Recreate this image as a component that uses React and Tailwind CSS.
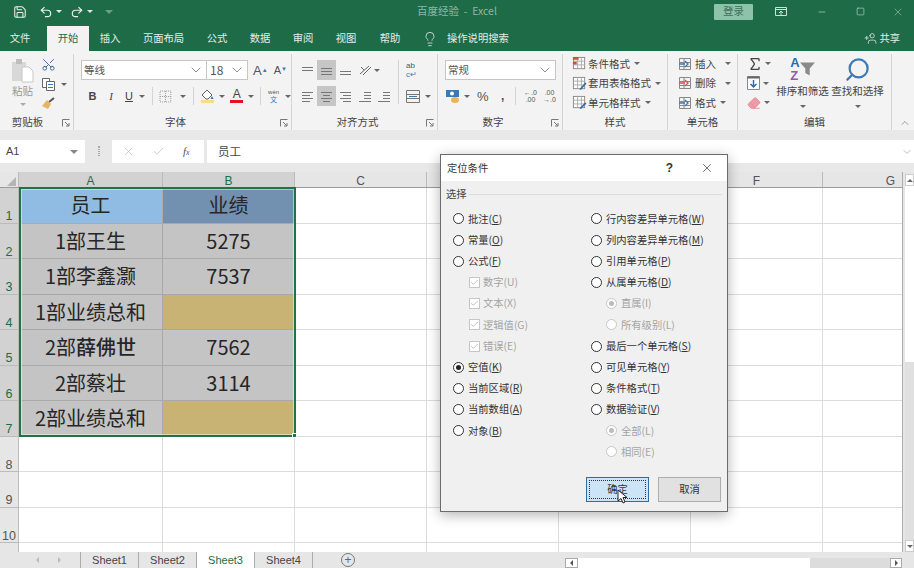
import { ChevronDown, Search, Lightbulb, UserPlus, Scissors, Undo2, Redo2, Save, Minus, Square, X, Check, Sigma, Eraser } from 'lucide-react';

const font = "font-['Noto_Sans_CJK_SC','Liberation_Sans',sans-serif]";

const tabs = [
    { name: '文件', w: 'w-[40px] mr-[7px]' },
    { name: '开始', w: 'w-[42px]', active: true },
    { name: '插入', w: 'w-[42px]' },
    { name: '页面布局', w: 'w-[65px]' },
    { name: '公式', w: 'w-[42px]' },
    { name: '数据', w: 'w-[44px]' },
    { name: '审阅', w: 'w-[42px]' },
    { name: '视图', w: 'w-[44px]' },
    { name: '帮助', w: 'w-[44px]' },
];

const columns = ['A', 'B', 'C', 'D', 'E', 'F', 'G'];

const rows = [
    ['员工', '业绩'],
    ['1部王生', '5275'],
    ['1部李鑫灏', '7537'],
    ['1部业绩总和', ''],
    [<>2部<span className="font-medium">薛佛世</span></>, '7562'],
    ['2部蔡壮', '3114'],
    ['2部业绩总和', ''],
];

function Caret({ className = '' }) {
    return <span className={`inline-block h-0 w-0 border-x-[3px] border-t-[3px] border-x-transparent border-t-[#666] ${className}`} />;
}

function GroupLabel({ children, launcher }) {
    return (
        <div className={`relative mt-auto flex h-[16px] items-center justify-center text-[10.5px] leading-none text-[#444] ${launcher ? 'pr-[14px]' : ''}`}>
            {children}
            {launcher && (
                <svg className="absolute right-[3px] top-[5px]" width="8" height="8" viewBox="0 0 8 8" fill="none" stroke="#777">
                    <path d="M.5 7.5v-7h7M3 3l4 4M7 4v3H4" />
                </svg>
            )}
        </div>
    );
}

function Group({ w, label, launcher, children }) {
    return (
        <div className={`flex shrink-0 flex-col border-r border-[#d4d4d4] ${w}`}>
            <div className="min-h-0 flex-1">{children}</div>
            <GroupLabel launcher={launcher}>{label}</GroupLabel>
        </div>
    );
}

function Lines({ rows, active }) {
    return (
        <span className={`flex h-[20px] w-[19px] items-center justify-center ${active ? 'bg-[#c6c6c6]' : ''}`}>
            <svg width="13" height="12" viewBox="0 0 13 12" stroke="#777">
                {rows.map((r, i) => (
                    <path key={i} d={`M${r[0]} ${r[1]}.5H${r[2]}`} />
                ))}
            </svg>
        </span>
    );
}

function CellIcon({ kind }) {
    return (
        <svg width="15" height="15" viewBox="0 0 16 16" fill="none" className="shrink-0">
            <rect x="1.5" y="1.5" width="12" height="12" fill="#fff" stroke="#888" />
            <path d="M1.5 5.5h12M1.5 9.5h12M6 1.5v12M10 1.5v12" stroke="#aaa" />
            {kind === 'cond' && <path d="M1 1h6v3H1zM1 6h4v3H1z" fill="#c0563a" />}
            {kind === 'table' && <path d="M8 14l6-7 1.500 1-6 7z" fill="#2b6cb0" />}
            {kind === 'style' && <path d="M8 14l6-6 1.500 1-6 6z" fill="#2b6cb0" />}
        </svg>
    );
}

function StyleRow({ kind, label }) {
    return (
        <div className="flex h-[19.5px] items-center gap-[1px] text-[10.5px] leading-none text-[#444]">
            <CellIcon kind={kind} />
            <span>{label}</span>
            <Caret className="ml-[3px]" />
        </div>
    );
}

function InsertRow({ label, color, caretGap }) {
    return (
        <div className="flex h-[19.5px] items-center gap-[3px] text-[10.5px] leading-none text-[#444]">
            <svg width="14" height="14" viewBox="0 0 14 14" fill="none" className="shrink-0">
                <path d="M1.5 1.5h11v11h-11zM1.5 5.5h11M1.5 9.5h11M6 1.5v11" stroke="#888" />
                <path d="M1 7h6M7 4l3 3-3 3" stroke={color} strokeWidth="1.3" />
            </svg>
            <span>{label}</span>
            <Caret className={caretGap} />
        </div>
    );
}

function Ribbon() {
    return (
        <div className={`flex h-[79px] bg-[#f3f3f3] pt-[3px] ${font}`}>
            <Group w="w-[74px]" label={<span className="mr-[4px]">剪贴板</span>} launcher>
                <div className="flex h-[60px] pl-[10px]">
                    <div className="flex w-[25px] flex-col items-center pt-[4px]">
                        <svg width="24" height="25" viewBox="0 0 24 25" fill="none">
                            <path d="M1 4h14v19H1z" fill="#d8d8d8" />
                            <path d="M5 1h6v5H5z" fill="#bdbdbd" />
                            <path d="M11 9h7l4 4v11H11z" fill="#fff" stroke="#c8c8c8" />
                        </svg>
                        <span className="mt-[3px] text-[10.5px] leading-none text-[#999]">粘贴</span>
                        <Caret className="mt-[6px] border-t-[#aaa]" />
                    </div>
                    <div className="ml-[6px] flex flex-col pt-[1px]">
                        <span className="flex h-[19.5px] items-center">
                            <Scissors size={15} className="-rotate-90 text-[#41699e]" strokeWidth={1.5} />
                        </span>
                        <span className="flex h-[19.5px] items-center gap-[6px]">
                            <svg width="14" height="14" viewBox="0 0 14 14" fill="none" stroke="#666">
                                <path d="M1.5 1.5h7v9h-7z" fill="#fff" />
                                <path d="M5.5 4.5h8v9h-8z" fill="#fff" />
                                <path d="M7 7.5h5M7 10.5h5" stroke="#3b7ab5" />
                            </svg>
                            <Caret />
                        </span>
                        <span className="flex h-[19.5px] items-center">
                            <svg width="14" height="13" viewBox="0 0 14 13" fill="none">
                                <path d="M8 5l5-4" stroke="#555" strokeWidth="2" />
                                <path d="M6 3l4 4-3 5-6-3z" fill="#e7b461" />
                            </svg>
                        </span>
                    </div>
                </div>
            </Group>
            <Group w="w-[218px]" label="字体" launcher>
                <div className="flex items-center pl-[7px] pt-[6px]">
                    <div className="flex h-[20px] w-[126px] items-center justify-between border border-[#c6c6c6] bg-white pl-[2px] pr-[2px] text-[10.5px] leading-none text-[#555]">
                        等线
                        <ChevronDown size={16} className="text-[#555]" strokeWidth={1} />
                    </div>
                    <div className="ml-[-1px] flex h-[20px] w-[42px] items-center justify-between border border-[#c6c6c6] bg-white pl-[3px] pr-[2px] text-[12px] leading-none text-[#555]">
                        18
                        <ChevronDown size={16} className="text-[#555]" strokeWidth={1} />
                    </div>
                    <span className="ml-[5px] font-['Liberation_Sans',sans-serif] text-[13px] leading-none text-[#555]">A<sup className="text-[6px] text-[#3b7ab5]">▲</sup></span>
                    <span className="ml-[6px] font-['Liberation_Sans',sans-serif] text-[11px] leading-none text-[#555]">A<sup className="text-[6px] text-[#3b7ab5]">▼</sup></span>
                </div>
                <div className="mt-[4px] flex h-[24px] items-center pl-[9px] font-['Liberation_Sans',sans-serif] text-[11px] text-[#444]">
                    <span className="w-[19px] text-center font-bold">B</span>
                    <span className="w-[19px] text-center font-['Liberation_Serif',serif] italic">I</span>
                    <span className="w-[17px] text-center underline">U</span>
                    <Caret className="ml-[2px]" />
                    <span className="ml-[7px] mr-[6px] h-[18px] w-px bg-[#d4d4d4]" />
                    <svg width="13" height="13" viewBox="0 0 13 13" fill="none" stroke="#999" strokeDasharray="1 1"><path d="M1 1h11v11H1zM1 6.5h11M6.5 1v11" /></svg>
                    <Caret className="ml-[8px]" />
                    <span className="ml-[7px] mr-[6px] h-[18px] w-px bg-[#d4d4d4]" />
                    <span className="flex flex-col items-center">
                        <svg width="14" height="11" viewBox="0 0 14 11" fill="none"><path d="M2 6l5-5 5 5-4 4H6z" fill="#fff" stroke="#666" /><path d="M12 7l1.500 3h-3z" fill="#3b7ab5" /></svg>
                        <span className="h-[3px] w-[13px] bg-[#f7dc8c]" />
                    </span>
                    <Caret className="ml-[5px]" />
                    <span className="ml-[5px] flex flex-col items-center leading-none">
                        <span className="text-[12px] leading-[11px] text-[#444]">A</span>
                        <span className="h-[3px] w-[13px] bg-[#e81123]" />
                    </span>
                    <Caret className="ml-[5px]" />
                    <span className="ml-[6px] mr-[6px] h-[18px] w-px bg-[#d4d4d4]" />
                    <span className="flex w-[13px] flex-col items-center leading-none">
                        <span className="text-[6px] leading-[7px] text-[#555]">wén</span>
                        <span className={`text-[7px] leading-[7px] text-[#3b7ab5] ${font}`}>文</span>
                    </span>
                    <Caret className="ml-[5px]" />
                </div>
            </Group>
            <Group w="w-[146px]" label="对齐方式" launcher>
                <div className="flex pl-[6px] pt-[6px]">
                    <div className="flex w-[100px] shrink-0 flex-wrap">
                        <Lines rows={[[1, 3, 12], [1, 6, 12]]} />
                        <Lines active rows={[[1, 4, 12], [1, 7, 12], [1, 10, 12]]} />
                        <Lines rows={[[1, 7, 12], [1, 10, 12]]} />
                        <span className="flex h-[20px] w-[28px] items-center justify-center gap-[2px]">
                            <svg width="13" height="13" viewBox="0 0 13 13" fill="none" stroke="#666"><path d="M1 10L10 2M4 11l8-8M2 3l3 3" /></svg>
                            <Caret />
                        </span>
                        <span className="h-[6px] w-full" />
                        <Lines rows={[[1, 2, 12], [1, 5, 9], [1, 8, 12], [1, 11, 9]]} />
                        <Lines active rows={[[1, 2, 12], [3, 5, 10], [1, 8, 12], [3, 11, 10]]} />
                        <Lines rows={[[1, 2, 12], [4, 5, 12], [1, 8, 12], [4, 11, 12]]} />
                        <Lines rows={[[6, 2, 13], [6, 5, 13], [6, 8, 13], [1, 11, 13]]} />
                        <Lines rows={[[6, 2, 13], [6, 5, 13], [6, 8, 13], [1, 11, 13]]} />
                    </div>
                    <div className="mr-[7px] h-[44px] w-px bg-[#d4d4d4]" />
                    <div className="flex flex-col gap-[6px]">
                        <span className="flex h-[20px] flex-col justify-center font-['Liberation_Sans',sans-serif] text-[8px] leading-[9px] text-[#555]">
                            <span>ab</span>
                            <span className="text-[#3b7ab5]">c↵</span>
                        </span>
                        <span className="flex h-[20px] items-center gap-[5px]">
                            <svg width="14" height="13" viewBox="0 0 14 13" fill="none" stroke="#777"><path d="M.5.5h13v12H.5zM.5 4.500h13M.500 8.500h13" /><path d="M3 6.500h8" stroke="#3b7ab5" /></svg>
                            <Caret />
                        </span>
                    </div>
                </div>
            </Group>
            <Group w="w-[125px]" label="数字" launcher>
                <div className="pl-[7px] pt-[6px]">
                    <div className="flex h-[20px] w-[111px] items-center justify-between border border-[#c6c6c6] bg-white pl-[2px] pr-[2px] text-[10.5px] leading-none text-[#555]">
                        常规
                        <ChevronDown size={16} className="text-[#555]" strokeWidth={1} />
                    </div>
                    <div className="mt-[6px] flex h-[20px] items-center font-['Liberation_Sans',sans-serif] text-[#555]">
                        <svg width="15" height="15" viewBox="0 0 15 15" fill="none"><path d="M1 1h13v7H1z" fill="#3b7ab5" /><circle cx="7" cy="4.500" r="2" fill="#fff" /><ellipse cx="10" cy="11" rx="4" ry="3" fill="#e7b461" /></svg>
                        <Caret className="ml-[4px]" />
                        <span className="ml-[7px] w-[15px] text-[13px] leading-none">%</span>
                        <span className="ml-[9px] w-[8px] text-[12px] font-bold leading-none">,</span>
                        <span className="ml-[6px] mr-[5px] h-[18px] w-px bg-[#d4d4d4]" />
                        <span className="w-[19px] text-center text-[7px] leading-[7px]">←.0<br />.00</span>
                        <span className="w-[19px] text-center text-[7px] leading-[7px]">.00<br />→.0</span>
                    </div>
                </div>
            </Group>
            <Group w="w-[105px]" label="样式">
                <div className="flex flex-col pl-[9px]">
                    <StyleRow kind="cond" label="条件格式" />
                    <StyleRow kind="table" label="套用表格格式" />
                    <StyleRow kind="style" label="单元格样式" />
                </div>
            </Group>
            <Group w="w-[70px]" label="单元格">
                <div className="flex flex-col pl-[10px]">
                    <InsertRow label="插入" color="#3b7ab5" caretGap="ml-[6px]" />
                    <InsertRow label="删除" color="#d9534f" caretGap="ml-[6px]" />
                    <InsertRow label="格式" color="#3b7ab5" caretGap="ml-[1px]" />
                </div>
            </Group>
            <Group w="w-[154px]" label="编辑">
                <div className="flex pl-[9px]">
                    <div className="flex w-[28px] shrink-0 flex-col">
                        <div className="flex h-[19.5px] items-center gap-[1px]">
                            <Sigma size={16} className="text-[#444]" strokeWidth={2} />
                            <Caret className="ml-[1px]" />
                        </div>
                        <div className="flex h-[19.5px] items-center gap-[3px]">
                            <svg width="13" height="14" viewBox="0 0 13 14" fill="none"><path d="M.5.5h12v13H.5z" fill="#fff" stroke="#888" /><path d="M.5.5h12v2H.5z" fill="#666" /><path d="M6.500 4v7M3.500 8l3 3 3-3" stroke="#2b6cb0" strokeWidth="1.500" /></svg>
                            <Caret />
                        </div>
                        <div className="flex h-[19.5px] items-center gap-[3px]">
                            <Eraser size={14} className="text-[#e08a94]" fill="#ef9aa4" strokeWidth={1.500} />
                            <Caret />
                        </div>
                    </div>
                    <div className="flex w-[55px] shrink-0 flex-col items-center text-[10.5px] leading-none text-[#444]">
                        <span className="flex h-[30px] items-center">
                            <span className="flex flex-col font-['Liberation_Sans',sans-serif] text-[13px] font-bold leading-[13px]">
                                <span className="text-[#2b6cb0]">A</span>
                                <span className="text-[#8e5ca8]">Z</span>
                            </span>
                            <svg width="15" height="14" viewBox="0 0 17 15" fill="#8a8a8a"><path d="M0 0h17l-6 7v8l-5-3V7z" /></svg>
                        </span>
                        <span className="mt-[2px]">排序和筛选</span>
                        <Caret className="mt-[8px]" />
                    </div>
                    <div className="flex w-[55px] shrink-0 flex-col items-center text-[10.5px] leading-none text-[#444]">
                        <span className="flex h-[30px] items-center">
                            <Search size={27} className="-scale-x-100 text-[#3b7ab5]" strokeWidth={2} />
                        </span>
                        <span className="mt-[2px]">查找和选择</span>
                        <Caret className="mt-[8px]" />
                    </div>
                </div>
            </Group>
            <div className="relative flex-1">
                <ChevronDown size={12} className="absolute bottom-[1px] right-[3px] rotate-180 text-[#666]" strokeWidth={1.200} />
            </div>
        </div>
    );
}

function TitleBar() {
    return (
        <div className={`flex h-[26px] items-center bg-[#1e6b48] pb-[3px] text-[#e9f1ec] ${font}`}>
            <Save size={14} className="ml-[13px]" strokeWidth={1.800} />
            <Undo2 size={14} className="ml-[12px]" strokeWidth={2} />
            <Caret className="ml-[3px] border-t-[#dfe9e3]" />
            <Redo2 size={14} className="ml-[8px]" strokeWidth={2} />
            <Caret className="ml-[3px] border-t-[#dfe9e3]" />
            <span className="ml-[12px] h-0 w-0 border-x-[4px] border-t-[4px] border-x-transparent border-t-[#6e9c84]" />
            <span className="ml-[300px] w-[88px] text-center text-[10.500px] leading-none text-[#8fb7a3]">百度经验&nbsp; -&nbsp; Excel</span>
            <span className="ml-[213px] flex h-[16px] w-[39px] items-center justify-center rounded-[1px] bg-[#8dc3aa] text-[10.5px] leading-none text-[#3f6f58]">登录</span>
            <svg width="12" height="10" viewBox="0 0 12 10" fill="none" stroke="#cfe0d6" className="ml-[22px]"><path d="M.5.5h11v8H.500zM.500 2.500h11M6 4v4M4 6l2-2 2 2" /></svg>
            <Minus size={10} className="ml-[30px] text-[#9cc0ad]" />
            <Square size={9} className="ml-[29px] text-[#cfe0d6]" strokeWidth={1.500} />
            <X size={12} className="ml-[27px] text-[#9cc0ad]" strokeWidth={1.300} />
        </div>
    );
}

function TabBar() {
    return (
        <div className={`flex h-[25px] items-stretch bg-[#1e6b48] text-[10.3px] leading-none text-[#e4ede8] ${font}`}>
            {tabs.map((t) => (
                <span key={t.name} className={`flex items-center justify-center ${t.w} ${t.active ? 'bg-[#f3f3f3] text-[#1e6b48]' : ''}`}>
                    {t.name}
                </span>
            ))}
            <Lightbulb size={16} className="ml-[10px] self-center" strokeWidth={1.200} />
            <span className="ml-[9px] self-center">操作说明搜索</span>
            <UserPlus size={13} className="ml-auto self-center -scale-x-100" strokeWidth={1.400} />
            <span className="ml-[2px] mr-[14px] self-center">共享</span>
        </div>
    );
}

function FormulaBar() {
    return (
        <div className={`flex h-[40px] items-start bg-[#e8e8e8] pt-[8px] ${font}`}>
            <div className="flex h-[23px] w-[85px] items-center justify-between bg-white pl-[6px] pr-[7px] font-['Liberation_Sans',sans-serif] text-[11px] leading-none text-[#444]">
                A1
                <span className="h-0 w-0 border-x-[4px] border-t-[4px] border-x-transparent border-t-[#888]" />
            </div>
            <span className="ml-[13px] mt-[6px] h-[10px] w-[2px] border-x border-dotted border-[#aaa]" />
            <div className="ml-[12px] flex h-[23px] w-[92px] items-center bg-white pl-[10px] text-[#c4c4c4]">
                <X size={13} strokeWidth={1.500} />
                <Check size={13} strokeWidth={1.500} className="ml-[17px]" />
                <span className="ml-[18px] font-['Liberation_Serif',serif] text-[11px] italic leading-none text-[#555]">f<span className="text-[8px]">x</span></span>
            </div>
            <div className="ml-[3px] flex h-[23px] flex-1 items-center justify-between bg-white pl-[11px] pr-[1px] text-[11.5px] leading-none text-[#444]">
                员工
                <ChevronDown size={12} className="text-[#bbb]" strokeWidth={2} />
            </div>
        </div>
    );
}

function Sheet() {
    const cols = 'grid-cols-[19px_144px_132px_132px_132px_132px_132px_80px]';
    return (
        <div className="flex h-[380px] bg-white">
            <div className="relative min-w-0 flex-1 overflow-hidden border-r border-[#ababab] bg-[#e6e6e6]">
                <div className={`grid h-[16px] ${cols} border-b border-[#9a9a9a] bg-[#e6e6e6] font-['Liberation_Sans',sans-serif] text-[12px] leading-none text-[#555]`}>
                    <span className="flex items-end justify-end border-r border-[#bbb] pb-[1px] pr-[2px]">
                        <span className="h-0 w-0 border-b-[9px] border-l-[9px] border-b-[#b4b4b4] border-l-transparent" />
                    </span>
                    {columns.map((c, i) => (
                        <span key={c} className={`flex items-end justify-center border-r border-[#bbb] ${i < 2 ? 'bg-[#d2d2d2] text-[#1e6b48]' : ''} ${i === 6 ? 'justify-end border-r-0 pr-[8px]' : ''}`}>
                            {c}
                        </span>
                    ))}
                </div>
                <div className={`grid ${cols} auto-rows-[35.500px] ${font}`}>
                    {Array.from({ length: 11 }, (_, r) => (
                        <Row key={r} index={r} />
                    ))}
                </div>
                <div className="pointer-events-none absolute left-[19px] top-[15px] h-[250px] w-[277px] border-2 border-[#217346] shadow-[inset_0_0_0_1px_rgba(255,255,255,0.45)]">
                    <span className="absolute -bottom-[3px] -right-[3px] size-[5px] border border-white bg-[#217346]" />
                </div>
            </div>
            <div className="flex w-[11px] flex-col bg-[#e6e6e6] pl-[2px] pt-[2px]">
                <span className="flex h-[12px] items-center justify-center border border-[#ccc] bg-white">
                    <span className="h-0 w-0 border-x-[3px] border-b-[3px] border-x-transparent border-b-[#666]" />
                </span>
                <span className="h-[176px] bg-white" />
                <span className="flex-1 bg-[#e0e0e0]" />
                <span className="flex h-[12px] items-center justify-center border border-[#ccc] bg-white">
                    <span className="h-0 w-0 border-x-[3px] border-t-[3px] border-x-transparent border-t-[#666]" />
                </span>
            </div>
        </div>
    );
}

function Row({ index }) {
    const data = rows[index];
    const isActive = index < 7;
    const h = `flex items-end justify-center border-b border-r border-[#bbb] font-['Liberation_Sans',sans-serif] text-[12.5px] leading-none ${isActive ? 'bg-[#d2d2d2] text-[#1e6b48]' : 'bg-[#e6e6e6] text-[#555]'}`;
    const empty = 'border-b border-r border-[#dcdcdc] bg-white';
    return (
        <>
            {/* the 11th row only peeks in under row 10, its number stays out of view */}
            <span className={h}>{index < 10 ? index + 1 : ''}</span>
            {data ? (
                data.map((text, c) => {
                    let bg = 'bg-[#c4c4c4]';
                    if (index === 0) bg = c === 0 ? 'bg-[#90bce3]' : 'bg-[#7290b0]';
                    else if (text === '') bg = 'bg-[#c8b375]';
                    return (
                        <span key={c} className={`flex items-center justify-center border-b border-r border-[#a9a9a9] text-[20px] leading-none text-[#262626] ${bg}`}>
                            {text}
                        </span>
                    );
                })
            ) : (
                <>
                    <span className={empty} />
                    <span className={empty} />
                </>
            )}
            {[0, 1, 2, 3, 4].map((c) => (
                <span key={c} className={empty} />
            ))}
        </>
    );
}

function Radio({ label, on, disabled, className = '' }) {
    const border = disabled ? 'border-[#c6c6c6]' : 'border-[#333]';
    const dot = disabled ? 'bg-[#bbb]' : 'bg-[#222]';
    return (
        <div className={`flex h-[21.200px] items-center ${className}`}>
            <span className={`flex size-[11px] items-center justify-center rounded-full border bg-white ${border}`}>
                {on && <span className={`size-[5px] rounded-full ${dot}`} />}
            </span>
            <span className={`ml-[4px] ${disabled ? 'text-[#a4a4a4]' : 'text-[#333]'}`}>{label}</span>
        </div>
    );
}

function Checked({ label }) {
    return (
        <div className="flex h-[21.200px] items-center pl-[16px]">
            <span className="flex size-[11px] items-center justify-center border border-[#c6c6c6] bg-white">
                <Check size={9} className="text-[#aaa]" strokeWidth={2} />
            </span>
            <span className="ml-[3px] text-[#a4a4a4]">{label}</span>
        </div>
    );
}

function U({ children }) {
    return <span className="underline">{children}</span>;
}

function GotoDialog() {
    return (
        <div className={`absolute left-[440px] top-[154px] h-[358px] w-[288px] border border-[#6b6b6b] bg-[#f0f0f0] text-[10.3px] leading-none shadow-[0_3px_12px_rgba(0,0,0,0.3)] ${font}`}>
            <div className="flex h-[26px] items-center bg-white pl-[6px] text-[#333]">
                定位条件
                <span className="ml-auto font-['Liberation_Sans',sans-serif] text-[12px] font-bold">?</span>
                <X size={14} strokeWidth={1.200} className="ml-[27px] mr-[13px]" />
            </div>
            <div className="flex items-center px-[5px] pt-[8px] text-[#444]">
                选择
                <span className="ml-[2px] h-px flex-1 bg-[#dcdcdc]" />
            </div>
            <div className="grid grid-cols-[138px_1fr] pl-[12px] pt-[9px]">
                <div>
                    <Radio label={<>批注(<U>C</U>)</>} />
                    <Radio label={<>常量(<U>O</U>)</>} />
                    <Radio label={<>公式(<U>F</U>)</>} />
                    <Checked label="数字(U)" />
                    <Checked label="文本(X)" />
                    <Checked label="逻辑值(G)" />
                    <Checked label="错误(E)" />
                    <Radio on label={<>空值(<U>K</U>)</>} />
                    <Radio label={<>当前区域(<U>R</U>)</>} />
                    <Radio label={<>当前数组(<U>A</U>)</>} />
                    <Radio label={<>对象(<U>B</U>)</>} />
                </div>
                <div>
                    <Radio label={<>行内容差异单元格(<U>W</U>)</>} />
                    <Radio label={<>列内容差异单元格(<U>M</U>)</>} />
                    <Radio label={<>引用单元格(<U>P</U>)</>} />
                    <Radio label={<>从属单元格(<U>D</U>)</>} />
                    <Radio on disabled className="pl-[15px]" label="直属(I)" />
                    <Radio disabled className="pl-[15px]" label="所有级别(L)" />
                    <Radio label={<>最后一个单元格(<U>S</U>)</>} />
                    <Radio label={<>可见单元格(<U>Y</U>)</>} />
                    <Radio label={<>条件格式(<U>T</U>)</>} />
                    <Radio label={<>数据验证(<U>V</U>)</>} />
                    <Radio on disabled className="pl-[15px]" label="全部(L)" />
                    <Radio disabled className="pl-[15px]" label="相同(E)" />
                </div>
            </div>
            <div className="absolute bottom-[9px] right-[6px] flex gap-[9px]">
                <div className="relative flex h-[25px] w-[63px] items-center justify-center border border-[#2f6ea5] bg-[#cce4f7] p-[2px] text-[#333]">
                    <span className="flex size-full items-center justify-center border border-dotted border-[#333]">确定</span>
                    <svg className="absolute left-[30px] top-[11px]" width="11" height="16" viewBox="0 0 11 16" fill="#fff" stroke="#222">
                        <path d="M1 1v11l3-2.500 2 4.500 2-1-2-4.500h4z" />
                    </svg>
                </div>
                <div className="flex h-[25px] w-[63px] items-center justify-center border border-[#adadad] bg-[#e1e1e1] text-[#333]">取消</div>
            </div>
        </div>
    );
}

function SheetTabs() {
    const names = ['Sheet1', 'Sheet2', 'Sheet3', 'Sheet4'];
    return (
        <div className="flex h-[16px] items-stretch bg-[#e6e6e6] font-['Liberation_Sans',sans-serif] text-[11px] leading-none text-[#444]">
            <span className="flex w-[81px] items-center justify-center gap-[19px] border-r border-[#ababab] pl-[17px] text-[#bbb]">
                <span className="h-0 w-0 border-y-[3px] border-r-[3px] border-y-transparent border-r-[#bbb]" />
                <span className="h-0 w-0 border-y-[3px] border-l-[3px] border-y-transparent border-l-[#bbb]" />
            </span>
            {names.map((n) => (
                <span
                    key={n}
                    className={`flex w-[58px] items-center justify-center border-r border-[#ababab] ${n === 'Sheet3' ? 'bg-white text-[#1e6b48]' : ''}`}
                >
                    {n}
                </span>
            ))}
            <span className="ml-[28px] flex items-center">
                <span className="flex size-[14px] items-center justify-center rounded-full border border-[#777] text-[12px] text-[#666]">+</span>
            </span>
            <span className="ml-[210px] mt-[6px] flex h-[10px] w-[337px]">
                <span className="flex h-full w-[13px] items-center justify-center border border-[#ababab] bg-white">
                    <span className="h-0 w-0 border-y-[3px] border-r-[3px] border-y-transparent border-r-[#555]" />
                </span>
                <span className="h-full w-[232px] bg-white" />
                <span className="h-full flex-1 bg-[#dcdcdc]" />
                <span className="flex h-full w-[12px] items-center justify-center border border-[#ababab] bg-white">
                    <span className="h-0 w-0 border-y-[3px] border-l-[3px] border-y-transparent border-l-[#555]" />
                </span>
            </span>
        </div>
    );
}

export default function App() {
    return (
        <div className="relative h-[568px] w-[914px] overflow-hidden bg-white">
            <TitleBar />
            <TabBar />
            <Ribbon />
            <div className="h-[2px] bg-[#e8e8e8]" />
            <FormulaBar />
            <Sheet />
            <SheetTabs />
            <GotoDialog />
        </div>
    );
}
